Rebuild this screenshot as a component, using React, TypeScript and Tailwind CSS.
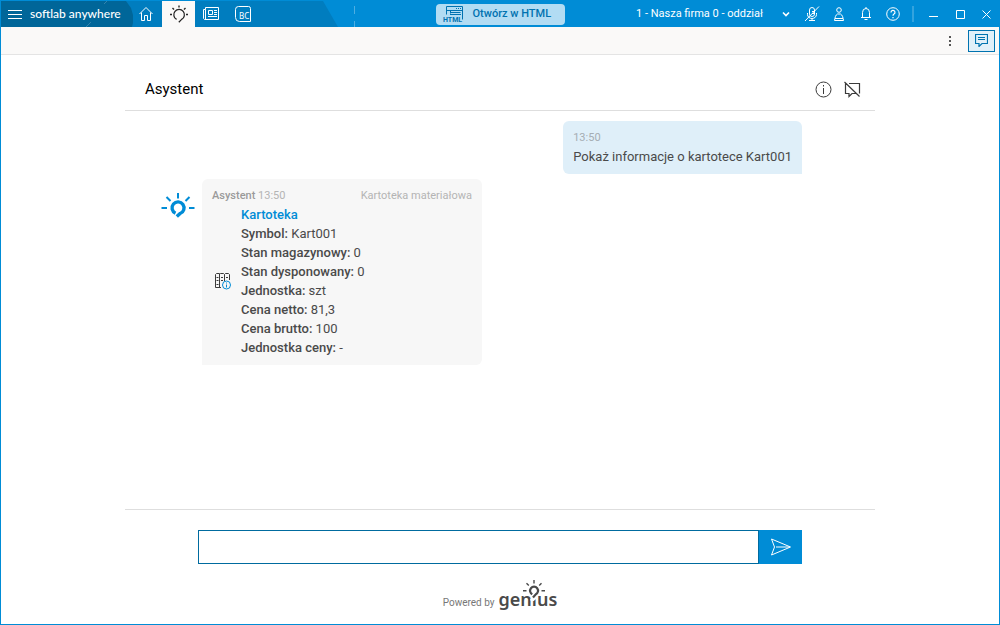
import { useState } from 'react';
import type { ReactNode } from 'react';

interface Field {
  label: string;
  value: string;
}

const fields: Field[] = [
  { label: 'Symbol:', value: 'Kart001' },
  { label: 'Stan magazynowy:', value: '0' },
  { label: 'Stan dysponowany:', value: '0' },
  { label: 'Jednostka:', value: 'szt' },
  { label: 'Cena netto:', value: '81,3' },
  { label: 'Cena brutto:', value: '100' },
  { label: 'Jednostka ceny:', value: '-' },
];

function Bulb({ className }: { className: string }) {
  return (
    <svg viewBox="0 0 34 26" className={className} fill="none" stroke="currentColor" aria-hidden="true">
      <path d="M14.500 21.300a6 6 0 1 1 4.600 0.200L15.800 24.600" strokeWidth="3.400" />
      <path d="M17 1v5.500M5.500 5l4 4M28.500 5l-4 4M0.500 16h5.500M28 16h5.500" strokeWidth="2" />
    </svg>
  );
}

function TabBulbIcon() {
  return (
    <svg viewBox="0 0 18 18" className="w-[18px] h-[18px]" fill="none" stroke="currentColor" aria-hidden="true">
      <path d="M6.600 14.400a5.300 5.300 0 1 1 5 0L8.800 17.300" strokeWidth="1.300" />
      <path d="M9 0.500v2M2.500 3l1.500 1.500M15.500 3L14 4.500M0 9.500h2M16 9.500h2" strokeWidth="1.400" />
    </svg>
  );
}

function GeniusBulb({ className }: { className: string }) {
  return (
    <svg viewBox="0 0 24 21" className={className} fill="none" aria-hidden="true">
      <path d="M9 21l6-5" stroke="#ffffff" strokeWidth="3.500" />
      <path d="M10.300 14.300a4 4 0 1 1 3.500 0L11 17.500" stroke="currentColor" strokeWidth="2.200" />
      <path d="M12 0v3.500M4.500 3.200l2.300 2.300M19.500 3.200l-2.300 2.300M1 10.800h3.500M19.500 10.800H23" stroke="currentColor" strokeWidth="1.400" />
    </svg>
  );
}

function HomeIcon() {
  return (
    <svg viewBox="0 0 16 16" className="w-4 h-4" fill="none" stroke="currentColor" aria-hidden="true">
      <path d="M1.500 8 8 1.500 14.500 8M3.500 6.500v8h3v-5h3v5h3v-8" />
    </svg>
  );
}

function NewsIcon() {
  return (
    <svg viewBox="0 0 16 14" className="w-4 h-3.5" fill="none" stroke="currentColor" aria-hidden="true">
      <path d="M2.500 0.500h13v12h-14l-1-1v-9h2zM2.500 2.500v10M5.500 3.500h4v4h-4zM11 3.500h3M11 5.500h3M11 7.500h3M5 9.500h9" />
    </svg>
  );
}

function BcIcon() {
  return (
    <svg viewBox="0 0 17 17" className="w-[17px] h-[17px]" aria-hidden="true">
      <path d="M3.500 0.500h10a2 2 0 0 1 2 2v13h-11a4 4 0 0 1-4-4v-8a3 3 0 0 1 3-3z" fill="none" stroke="currentColor" />
      <text x="4" y="13" fontSize="8" fill="currentColor" className="font-['Noto_Sans',sans-serif]">BC</text>
    </svg>
  );
}

function HtmlIcon() {
  return (
    <svg viewBox="0 0 22 17" className="w-[22px] h-[17px]" aria-hidden="true">
      <path d="M3.500 8.500v-8h16v13M3.500 4.500h16M7.500 7.500v-3M8 6.500h9.500M7 8.500h11" fill="none" stroke="currentColor" />
      <path d="M13 2.500h1M15 2.500h1M17 2.500h1" stroke="currentColor" />
      <text x="0" y="16" fontSize="7" fontWeight="700" fill="currentColor" className="font-['Roboto',sans-serif]">HTML</text>
    </svg>
  );
}

function MicOffIcon() {
  return (
    <svg viewBox="0 0 16 16" className="w-4 h-4" fill="none" stroke="currentColor" aria-hidden="true">
      <path d="M5.500 4a2.500 2.500 0 0 1 5 0v4a2.500 2.500 0 0 1-5 0zM3.500 7v1.500a4.500 4 0 0 0 9 0V7M8 12.500v2M5 14.500h6M8 5.500h2M8 7.500h2M1 15 15 0.500" />
    </svg>
  );
}

function PersonIcon() {
  return (
    <svg viewBox="0 0 16 16" className="w-4 h-4" fill="none" stroke="currentColor" aria-hidden="true">
      <circle cx="8" cy="4" r="2.300" />
      <path d="M6.500 8C4.500 9 4 11.500 3.500 14.500h9C12 11.500 11.500 9 9.500 8zM4 12.500h8" />
    </svg>
  );
}

function BellIcon() {
  return (
    <svg viewBox="0 0 16 16" className="w-4 h-4" fill="none" stroke="currentColor" aria-hidden="true">
      <path d="M3 11.500h10M4.500 11.500V6.500a3.500 4 0 0 1 7 0v5M8 1v1.500M6.500 13.500h3" />
    </svg>
  );
}

function HelpIcon() {
  return (
    <svg viewBox="0 0 16 16" className="w-4 h-4" fill="none" stroke="currentColor" aria-hidden="true">
      <circle cx="8" cy="8" r="6.300" />
      <path d="M6 6.500a2 2 0 1 1 3 1.600c-.7.4-1 .7-1 1.700M8 11v1.300" strokeWidth="1.200" />
    </svg>
  );
}

function CardIcon() {
  return (
    <svg viewBox="0 0 17 17" className="w-[17px] h-[17px]" fill="none" aria-hidden="true">
      <path
        d="M7 14.500H1.500V1.500l1-1h3v14M5.500 1.500l1-1h3l1 1v7M10.500 1.500l1-1h3l1 1V7M2.500 4.500h2M2.500 7.500h2M2.500 11.500h2M7 4.500h2M7 7.500h2M12 4.500h2"
        stroke="#3b3b3b"
      />
      <circle cx="12.500" cy="12" r="4" fill="#f7f7f7" stroke="#008cd6" />
      <path d="M12.500 11.500v3M12.500 9.500v1" stroke="#008cd6" />
    </svg>
  );
}

function IconButton({ label, className = '', children }: { label: string; className?: string; children: ReactNode }) {
  return (
    <button aria-label={label} className={`flex items-center justify-center h-full shrink-0 ${className}`}>
      {children}
    </button>
  );
}

function TitleBar() {
  return (
    <header className="grid grid-cols-[1fr_auto_1fr] items-center h-[26px] bg-[#008cd6] text-white">
      <div className="flex h-full">
        <div className="flex h-full w-[337px] shrink-0 bg-[#007dbf] [clip-path:polygon(0_0,322px_0,100%_100%,0_100%)]">
          <button className="relative flex items-center w-[132px] h-full pl-[7px] gap-2 bg-[#006699] [clip-path:polygon(0_0,125px_0,130px_7px,100%_14px,100%_22px,131px_100%,0_100%)] font-['Lato',sans-serif] text-xs">
            <svg viewBox="0 0 14 9" className="w-3.5 h-[9px]" stroke="currentColor" aria-hidden="true">
              <path d="M0 .5h14M0 4.500h14M0 8.500h14" />
            </svg>
            <span className="font-medium">softlab anywhere</span>
            <svg viewBox="0 0 22 26" className="absolute left-[84px] top-0 w-[22px] h-[26px] text-white/20" stroke="currentColor" aria-hidden="true">
              <path d="M1 26l5-5M19 3l3-3" />
            </svg>
          </button>
          <IconButton label="Start" className="w-8 -ml-[3px]"><HomeIcon /></IconButton>
          <IconButton label="Asystent" className="w-[33px] bg-[#faf9f8] text-[#252525]">
            <TabBulbIcon />
          </IconButton>
          <IconButton label="Aktualności" className="w-8"><NewsIcon /></IconButton>
          <IconButton label="BC" className="w-8"><BcIcon /></IconButton>
        </div>
        <svg viewBox="0 0 2 26" className="w-0.5 h-[26px] ml-[15px] text-white/30" stroke="currentColor" aria-hidden="true">
          <path d="M1.500 5v8M1.500 20v6" />
        </svg>
      </div>

      <button className="flex items-center w-[129px] h-[21px] pl-[7px] gap-2 rounded-sm bg-[#b2dcf3] text-[#0072b0] text-[11px] font-medium">
        <HtmlIcon />
        Otwórz w HTML
      </button>

      <div className="flex items-center justify-end h-full">
        <div className="relative flex items-center w-[162px]">
          <select
            aria-label="Firma"
            className="w-full appearance-none bg-transparent text-[11px] leading-4 outline-none"
          >
            <option>1 - Nasza firma 0 - oddział</option>
          </select>
          <svg viewBox="0 0 8 6" className="absolute right-2 w-2 h-1.5 pointer-events-none" fill="none" stroke="currentColor" strokeWidth="1.600" aria-hidden="true">
            <path d="M1 1.500l3 3 3-3" />
          </svg>
        </div>
        <IconButton label="Mikrofon" className="w-[27px]"><MicOffIcon /></IconButton>
        <IconButton label="Użytkownik" className="w-[27px]"><PersonIcon /></IconButton>
        <IconButton label="Powiadomienia" className="w-[27px]"><BellIcon /></IconButton>
        <IconButton label="Pomoc" className="w-[27px]"><HelpIcon /></IconButton>
        <div className="w-0.5 h-4 mx-1.5 bg-white/20" />
        <IconButton label="Minimalizuj" className="w-[27px]">
          <svg viewBox="0 0 9 9" className="w-[9px] h-[9px]" stroke="currentColor" aria-hidden="true"><path d="M0 6.500h9" /></svg>
        </IconButton>
        <IconButton label="Maksymalizuj" className="w-[27px]">
          <svg viewBox="0 0 9 9" className="w-[9px] h-[9px]" fill="none" stroke="currentColor" aria-hidden="true"><path d="M.5.5h8v8h-8z" /></svg>
        </IconButton>
        <IconButton label="Zamknij" className="w-[25px]">
          <svg viewBox="0 0 9 9" className="w-[9px] h-[9px]" stroke="currentColor" aria-hidden="true"><path d="M.5.5l8 8M8.500.5l-8 8" /></svg>
        </IconButton>
      </div>
    </header>
  );
}

export default function App() {
  const [message, setMessage] = useState('');

  return (
    <div className="flex flex-col min-h-screen border border-[#008cd6] bg-white font-['Roboto',sans-serif] text-[13px] text-[#4a4a4a]">
      <TitleBar />

      {/* Toolbar */}
      <div className="flex items-center justify-end h-7 pr-1 gap-3 bg-[#faf9f8] border-b border-[#e4e4e4]">
        <IconButton label="Więcej" className="w-3 text-[#555555]">
          <svg viewBox="0 0 2 10" className="w-0.5 h-2.5" fill="currentColor" aria-hidden="true">
            <path d="M0 0h2v2H0zM0 4h2v2H0zM0 8h2v2H0z" />
          </svg>
        </IconButton>
        <button aria-label="Czat" className="flex items-center justify-center w-[27px] h-[22px] border border-[#0073b0] bg-[#e1f0f9] text-[#0073b0]">
          <svg viewBox="0 0 13 13" className="w-[13px] h-[13px]" fill="none" stroke="currentColor" aria-hidden="true">
            <path d="M.5.5h12v9H7l-3 3v-3H.5zM3 3.500h7M3 5.500h7" strokeWidth="1.200" />
          </svg>
        </button>
      </div>

      <main className="flex flex-col flex-1 w-full max-w-[750px] mx-auto">
        {/* Chat header */}
        <div className="flex items-center justify-between h-14 pl-5 pr-3.5 pt-3.5 border-b border-[#dedede]">
          <h1 className="text-[15px] text-black">Asystent</h1>
          <div className="flex items-center gap-3 text-[#3b3b3b]">
            <button aria-label="Informacje">
              <svg viewBox="0 0 17 17" className="w-[17px] h-[17px]" fill="none" stroke="currentColor" aria-hidden="true">
                <circle cx="8.500" cy="8.500" r="7.500" />
                <path d="M8.500 7v6M8.500 4v1.500" />
              </svg>
            </button>
            <button aria-label="Wyczyść rozmowę">
              <svg viewBox="0 0 17 17" className="w-[17px] h-[17px]" fill="none" stroke="currentColor" aria-hidden="true">
                <path d="M5 2.500h10.500v10M12.500 12.500H8l-3 3v-3H1.500v-10M.5 1l15 14.500" strokeWidth="1.200" />
              </svg>
            </button>
          </div>
        </div>

        {/* Messages */}
        <div className="flex flex-col flex-1 pt-2.5 pl-9 pr-[73px] gap-[5px]">
          <div className="self-end pt-2 pb-[7px] px-2.5 rounded-md rounded-br-none bg-[#dfeff9]">
            <div className="text-[11px] leading-[18px] text-[#a5adb3]">13:50</div>
            <p className="leading-5">Pokaż informacje o kartotece Kart001</p>
          </div>

          <div className="flex items-start gap-[7px]">
            <Bulb className="w-[34px] h-[26px] mt-[13px] text-[#008cd6]" />
            <div className="w-[280px] pt-[7px] pb-2 px-2.5 rounded-md rounded-bl-none bg-[#f7f7f7]">
              <div className="flex justify-between text-[11px] leading-[19px] text-[#b4b4b4]">
                <span><b className="font-medium text-[#9a9a9a]">Asystent</b> 13:50</span>
                <span>Kartoteka materiałowa</span>
              </div>
              <div className="flex items-center gap-2.5 pl-0.5">
                <CardIcon />
                <div className="leading-[19px]">
                  <a href="#kartoteka" className="font-medium text-[#008cd6]">Kartoteka</a>
                  {fields.map((field) => (
                    <div key={field.label}>
                      <span className="font-medium">{field.label}</span> {field.value}
                    </div>
                  ))}
                </div>
              </div>
            </div>
          </div>
        </div>

        {/* Message box */}
        <footer className="pt-5 px-[73px] border-t border-[#dedede]">
          <form className="flex h-[34px]" onSubmit={(e) => e.preventDefault()}>
            <input
              type="text"
              aria-label="Wiadomość"
              value={message}
              onChange={(e) => setMessage(e.target.value)}
              className="flex-1 min-w-0 px-2 border border-[#006b9f] bg-white outline-none"
            />
            <button aria-label="Wyślij" className="flex items-center justify-center w-[43px] bg-[#008cd6] text-white">
              <svg viewBox="0 0 22 18" className="w-[22px] h-[18px]" fill="none" stroke="currentColor" aria-hidden="true">
                <path d="M1.500 1 20.500 9 1.500 17l3-8zM6 9h14" />
              </svg>
            </button>
          </form>
          <div className="flex items-baseline justify-center h-[60px] pt-[21px] gap-1 text-[10px] text-[#777777]">
            Powered by
            <span className="font-['Noto_Sans',sans-serif] font-semibold text-lg leading-7 text-[#4a4a4a]">
              gen
              <span className="relative">
                ı
                <GeniusBulb className="absolute left-1/2 -translate-x-1/2 bottom-2.5 w-6 h-[21px] max-w-none" />
              </span>
              us
            </span>
          </div>
        </footer>
      </main>
    </div>
  );
}
